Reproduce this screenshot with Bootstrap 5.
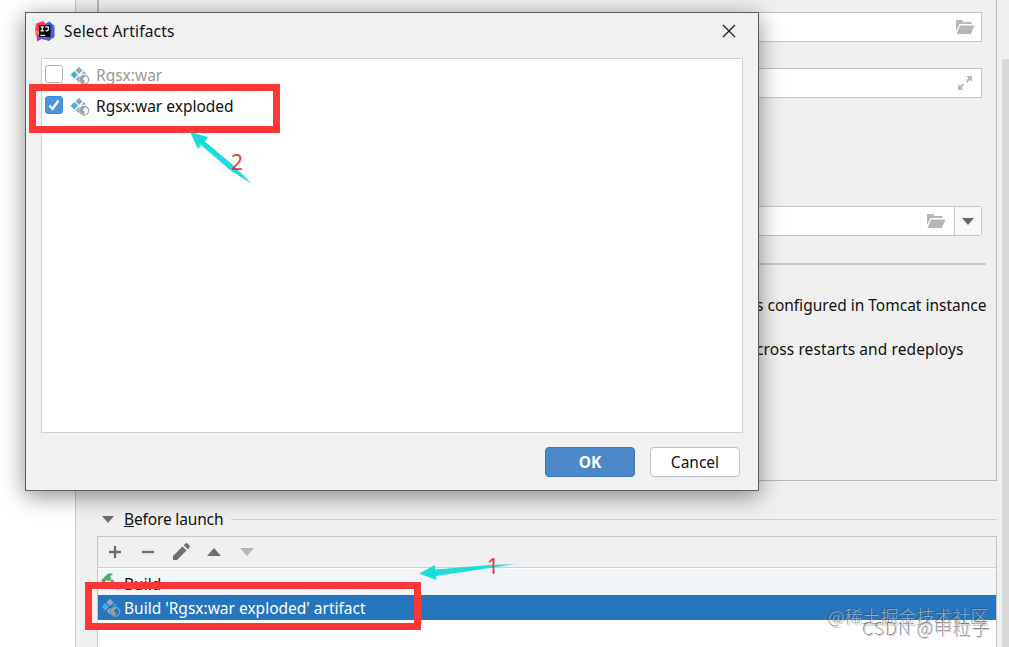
<!DOCTYPE html>
<html lang="en">
<head>
  <meta charset="UTF-8">
  <meta name="viewport" content="width=device-width, initial-scale=1.0">
  <title>Select Artifacts</title>
  <link href="https://cdn.jsdelivr.net/npm/bootstrap@5.3.0/dist/css/bootstrap.min.css" rel="stylesheet">
  <style>
    body {
      width: 1009px;
      height: 647px;
      font-family: "Noto Sans", "Noto Sans CJK SC", sans-serif;
      font-size: 15.5px;
      line-height: 24px;
      color: #111;
      background: #fff;
    }
    svg { display: block; flex: none; }
    .side { width: 75px; }
    .settings {
      background: #f0f0f0;
      border-left: 1px solid #c9c9c9;
      padding-left: 21px;
    }
    .track { width: 12px; padding-left: 5px; padding-top: 59px; }
    .thumb { background: #d8d8d8; }

    /* server tab behind the dialog */
    .tab-pane-box {
      height: 481px;
      border: 1px solid #b9b9b9;
      border-left-width: 2px;
      border-top: 0;
      padding: 12px 14px 0 20px;
    }
    .field {
      height: 30px;
      background: #fff;
      border: 1px solid #c4c4c4;
      padding-right: 6px;
    }
    .field-url { margin-top: 26px; padding-right: 7px; }
    .field-jre { margin-top: 108px; border-radius: 3px; padding-right: 0; }
    .drop { width: 27px; border-left: 1px solid #c4c4c4; margin-left: 8px; background: #f8f8f8; }
    .split { height: 2px; background: #cbcbcb; margin: 27px -4px 0 0; }
    .note { padding-left: 637px; }
    .note-a { margin-top: 28px; }
    .note-b { margin-top: 20px; letter-spacing: .1px; }

    /* before launch */
    .launch-head { margin-top: 26px; height: 24px; padding-left: 5px; }
    .launch-label { margin-left: 10px; letter-spacing: -.15px; }
    .launch-rule { height: 1px; background: #d0d0d0; margin-left: 8px; }
    .launch-box { margin-top: 5px; height: 112px; border: 1px solid #c6c6c6; background: #fff; }
    .tools { height: 31px; background: #f0f0f0; border-bottom: 1px solid #cfcfcf; padding-left: 7px; gap: 13px; }
    .task { height: 25px; padding-left: 3px; gap: 3px; }
    .task-build { background: #f0f5fa; height: 26px; margin-top: 1px; }
    .task-picked { background: #2675bf; color: #fff; }

    /* dialog */
    .dialog {
      left: 25px;
      top: 12px;
      width: 734px;
      height: 479px;
      background: #f1f1f1;
      border: 1px solid #5c5c5c;
      box-shadow: 0 5px 22px rgba(0, 0, 0, .45);
      padding: 0 15px;
    }
    .dialog-title { height: 45px; padding: 0 7px 10px 0; margin-left: -7px; gap: 8px; letter-spacing: .2px; }
    .artifacts { height: 375px; background: #fff; border: 1px solid #cfcfcf; }
    .artifact { height: 31px; padding-left: 3px; }
    .tick { width: 18px; height: 18px; border: 1px solid #b0b0b0; border-radius: 3px; background: #fff; margin-top: -1px; }
    .tick-on { background: #4a95dd; border-color: #3f87cc; }
    .artifact-icon { margin: 2px 6px 0 7px; }
    .off { color: #999; }
    .actions { margin-top: 14px; gap: 15px; padding-right: 3px; }
    .act {
      width: 90px;
      height: 30px;
      padding: 0;
      font-size: 15.5px;
      line-height: 28px;
      border: 1px solid #bfbfbf;
      border-radius: 4px;
      background: #fff;
      color: #111;
    }
    .act-ok { background: #4a88c7; border-color: #3c75b0; color: #fff; font-weight: 700; }

    /* hand-drawn marks */
    .frame { border: 7px solid #fd3636; }
    .frame-1 { left: 85px; top: 582px; width: 336px; height: 48px; }
    .frame-2 { left: 29px; top: 84px; width: 251px; height: 49px; }
    .arrows { left: 0; top: 0; }
    .num { color: #e23b3f; font-size: 21px; line-height: 24px; }
    .num-1 { left: 487px; top: 554px; }
    .num-2 { left: 231px; top: 150px; }
    .wm { white-space: nowrap; font-family: "Noto Sans CJK SC", sans-serif; font-weight: 300; }
    .wm-a { left: 828px; top: 604px; font-size: 18px; color: rgba(205, 215, 225, .6); text-shadow: -1px -1px 0 rgba(60, 60, 60, .5), 1px 1px 0 rgba(90, 90, 90, .3); }
    .wm-b { left: 863px; top: 616px; font-size: 18px; letter-spacing: .9px; color: #d5d5d5; text-shadow: -1px -1px 0 rgba(60, 60, 60, .65); }
  </style>
</head>
<body class="position-relative overflow-hidden">
  <svg width="0" height="0" class="position-absolute">
    <defs>
      <symbol id="artifact" viewBox="0 0 20 20">
        <path fill="#9aa7b0" d="M9 .8l3.600 3.600L9 8 5.400 4.400z"/>
        <path fill="#40b0dc" d="M4.300 5.100L8 8.800l-3.700 3.700L.6 8.800z"/>
        <path fill="#40b0dc" d="M13.500 5.200l3.300 2.700c-2.200-.6-4.200-.2-5.600 1z"/>
        <path fill="#9aa7b0" d="M9 9.800l.8.8c-1.200 1.600-1.400 3.400-.6 5.600L9 16.400 5.700 13.100z"/>
        <circle cx="14.200" cy="13.800" r="4.400" fill="none" stroke="#9aa0a6" stroke-width="1.200"/>
        <path fill="#9aa0a6" d="M10 13c.4-2.400 2.500-3.900 4.600-3.500l.4 1.400-1.700 1-.3 1.600 1.800 1.200-.7 2.800c-2.300-.2-4.200-2-4.100-4.500z"/>
      </symbol>
      <symbol id="folder" viewBox="0 0 20 16">
        <path fill="#b4b8ba" d="M1 1h6l2 2h7.500v2H4.600L1 12z"/>
        <path fill="#b4b8ba" d="M5 6.500h14.500L15.800 15H1.500z"/>
      </symbol>
    </defs>
  </svg>

  <div class="d-flex h-100">
    <div class="side flex-shrink-0"></div>
    <div class="settings d-flex flex-fill overflow-hidden">
      <div class="flex-fill overflow-hidden">
        <div class="tab-pane-box">
          <div class="field d-flex align-items-center justify-content-end">
            <svg width="20" height="16"><use href="#folder"/></svg>
          </div>
          <div class="field field-url d-flex align-items-center justify-content-end">
            <svg width="18" height="18" viewBox="0 0 18 18"><path fill="#b4b8ba" d="M10 2h6v6l-2-2-3 3-1.300-1.300L12.300 4zM2 10l2 2 2.800-2.800L8 10.500 5.500 14l2 2H2z"/></svg>
          </div>
          <div class="field field-jre d-flex align-items-center justify-content-end">
            <svg width="20" height="16"><use href="#folder"/></svg>
            <div class="drop h-100 d-flex align-items-center justify-content-center">
              <svg width="12" height="7"><path fill="#666" d="M0 0h12L6 7z"/></svg>
            </div>
          </div>
          <div class="split"></div>
          <div class="note note-a text-nowrap">s configured in Tomcat instance</div>
          <div class="note note-b text-nowrap">cross restarts and redeploys</div>
        </div>

        <div class="launch-head d-flex align-items-center">
          <svg width="12" height="7"><path fill="#6e6e6e" d="M0 0h12L6 7z"/></svg>
          <span class="launch-label"><u>B</u>efore launch</span>
          <div class="launch-rule flex-grow-1"></div>
        </div>
        <div class="launch-box">
          <div class="tools d-flex align-items-center">
            <svg width="20" height="20"><path stroke="#6e6e6e" stroke-width="2.300" d="M4 10h12M10 4v12"/></svg>
            <svg width="20" height="20"><path stroke="#6e6e6e" stroke-width="2.300" d="M4 10h12"/></svg>
            <svg width="20" height="20"><path fill="#6e6e6e" d="M2 18v-4L11.500 4.500l4 4L6 18zM12.700 3.300L14.500 1.500q1-.8 2 0l2 2q.8 1 0 2l-1.800 1.800z"/></svg>
            <svg width="20" height="20"><path fill="#6e6e6e" d="M3 14h14l-7-8z"/></svg>
            <svg width="20" height="20"><path fill="#b5b5b5" d="M3 6h14l-7 8z"/></svg>
          </div>
          <div class="task task-build d-flex align-items-center">
            <svg width="20" height="20"><path fill="#59a869" d="M0 8.500L6.500 2q3-1.500 5.500 .2L9 4.500l1.500 2-3 3L6 8l-3.500 3z"/><path fill="#59a869" d="M9 9l2-2 8 9-2 2z"/></svg>
            <span class="pt-1">Build</span>
          </div>
          <div class="task task-picked d-flex align-items-center">
            <svg width="20" height="20"><use href="#artifact"/></svg>
            <span>Build 'Rgsx:war exploded' artifact</span>
          </div>
        </div>
      </div>
      <div class="track d-flex flex-shrink-0"><div class="thumb flex-grow-1"></div></div>
    </div>
  </div>

  <div class="dialog position-absolute">
    <div class="dialog-title d-flex align-items-center">
      <svg width="22" height="22" viewBox="0 0 22 22">
        <path fill="#fc3b62" d="M2 3.500L9 1l4 4-6 8-6-2z"/>
        <path fill="#f98a2b" d="M1 10l4 1v6l-3.500-1.500z"/>
        <path fill="#3c62e0" d="M12 3.500L15.500 1.500l5 4.500V17l-6 4-5-2z"/>
        <path fill="#a13fc8" d="M2.500 14l9 3-1 3-3-1-4.500 2.500z"/>
        <path d="M5 5h11.500v12H5z"/>
        <path stroke="#fff" stroke-width="1.200" fill="none" d="M6.500 6.800h3.400M8.200 6.800v4M6.500 10.900h3.400M11.300 6.800h3v2.800q0 1.300-1.300 1.300h-1.500M6.500 15.300H11"/>
      </svg>
      <span class="flex-grow-1">Select Artifacts</span>
      <svg width="14" height="14"><path stroke="#222" stroke-width="1.400" d="M1 1l12 12M13 1L1 13"/></svg>
    </div>
    <div class="artifacts">
      <div class="artifact off d-flex align-items-center">
        <div class="tick"></div>
        <svg class="artifact-icon" width="20" height="20"><use href="#artifact"/></svg>
        <span>Rgsx:war</span>
      </div>
      <div class="artifact d-flex align-items-center">
        <div class="tick tick-on"><svg width="16" height="16"><path stroke="#fff" stroke-width="2.200" fill="none" d="M3.500 8.500l3 3.500 6-8.500"/></svg></div>
        <svg class="artifact-icon" width="20" height="20"><use href="#artifact"/></svg>
        <span>Rgsx:war exploded</span>
      </div>
    </div>
    <div class="actions d-flex justify-content-end">
      <button type="button" class="btn act act-ok">OK</button>
      <button type="button" class="btn act">Cancel</button>
    </div>
  </div>

  <div class="frame frame-1 position-absolute"></div>
  <div class="frame frame-2 position-absolute"></div>
  <svg class="arrows position-absolute" width="1009" height="647">
    <path fill="#1fdcdc" d="M190 132l18 5-3 4.500L233 165l19 19-22-14-29-25-3 4z"/>
    <path fill="#1fdcdc" d="M419 573.500l16-8.500v4.500L490 565l25-1-25 4-54 8 .5 4z"/>
  </svg>
  <span class="num num-1 position-absolute">1</span>
  <span class="num num-2 position-absolute">2</span>
  <span class="wm wm-a position-absolute">@稀土掘金技术社区</span>
  <span class="wm wm-b position-absolute">CSDN @申粒子</span>

  <script src="https://cdn.jsdelivr.net/npm/bootstrap@5.3.0/dist/js/bootstrap.bundle.min.js"></script>
</body>
</html>
